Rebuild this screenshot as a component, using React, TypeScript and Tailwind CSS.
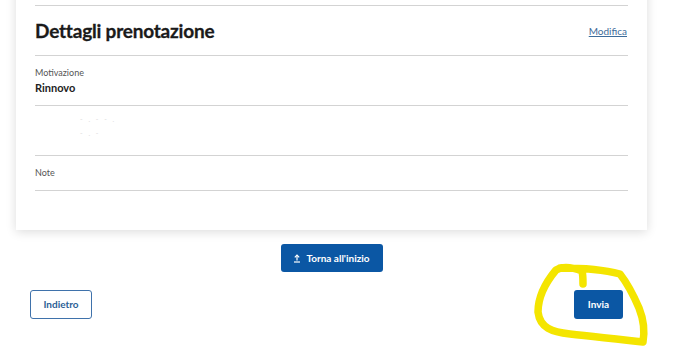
import React from 'react'

function UploadIcon() {
  return (
    <svg width="8" height="9" viewBox="0 0 8 9" fill="none" stroke="white" strokeWidth="1.2">
      <path d="M4 6.5V1.2" />
      <path d="M1.8 3.3L4 1.1l2.2 2.2" />
      <path d="M1 8h6" />
    </svg>
  )
}

function Divider() {
  return <div className="h-px bg-[#d3d3d3]" />
}

export default function App() {
  return (
    <div className="relative w-[700px] h-[348px] overflow-hidden bg-white" style={{ fontFamily: 'Lato, "Open Sans", sans-serif' }}>
      <div className="ml-[16px] w-[631px]">
        <div className="-mt-[20px] bg-white shadow-[0_2px_10px_rgba(0,0,0,0.14)] px-[19px] pt-[25px] pb-[39px]">
          <Divider />
          <div className="h-[49px] flex items-center justify-between">
            <h2 className="text-[19px] font-bold text-[#1a1a1a] tracking-[-0.2px] leading-none mt-[-1px] [-webkit-text-stroke:0.3px_#1a1a1a]">Dettagli prenotazione</h2>
            <a className="text-[10px] text-[#3d6c9b] underline mt-[2px] mr-[1px]">Modifica</a>
          </div>
          <Divider />
          <div className="h-[49px] pt-[11px]">
            <div className="text-[9px] text-[#555] leading-[12px]">Motivazione</div>
            <div className="text-[11px] font-bold text-[#222] leading-[14px] mt-[2px]">Rinnovo</div>
          </div>
          <Divider />
          <div className="h-[49px] pt-[8px] pl-[45px]">
            <div className="text-[7px] text-[#dcdcdc] leading-[10px] tracking-[2px]">- . - - .</div>
            <div className="text-[7px] text-[#dcdcdc] leading-[10px] mt-[4px] tracking-[2px]">- . -</div>
          </div>
          <Divider />
          <div className="h-[34px] flex items-center">
            <div className="text-[9px] text-[#555]">Note</div>
          </div>
          <Divider />
        </div>
        <div className="flex justify-center mt-[14px]">
          <button className="w-[102px] h-[28px] rounded-[3px] bg-[#0b57a4] text-white text-[10px] font-bold flex items-center justify-center gap-[5px]">
            <UploadIcon />
            Torna all'inizio
          </button>
        </div>
      </div>
      <div className="ml-[30px] w-[593px] mt-[18px] flex justify-between">
        <button className="w-[62px] h-[29px] rounded-[3px] border-[1.5px] border-[#3f72ab] text-[#2c5f96] text-[10px] font-bold bg-white">Indietro</button>
        <button className="w-[49px] h-[29px] rounded-[3px] bg-[#0b57a4] text-white text-[10px] font-bold">Invia</button>
      </div>
      <svg className="absolute left-0 top-0 pointer-events-none" width="700" height="348" viewBox="0 0 700 348" fill="none">
        <path
          d="M583 284 C583 279 583 275 582 271 C574 268 563 266 556 270 C546 282 538 296 538 312 C540 328 552 332 570 334 C595 337 620 339 643 342 C645 330 643 318 639 308 C633 294 627 283 620 274 C605 270 590 268 560 268"
          stroke="#f4e500"
          strokeWidth="7.5"
          strokeLinecap="round"
          strokeLinejoin="round"
        />
      </svg>
    </div>
  )
}
